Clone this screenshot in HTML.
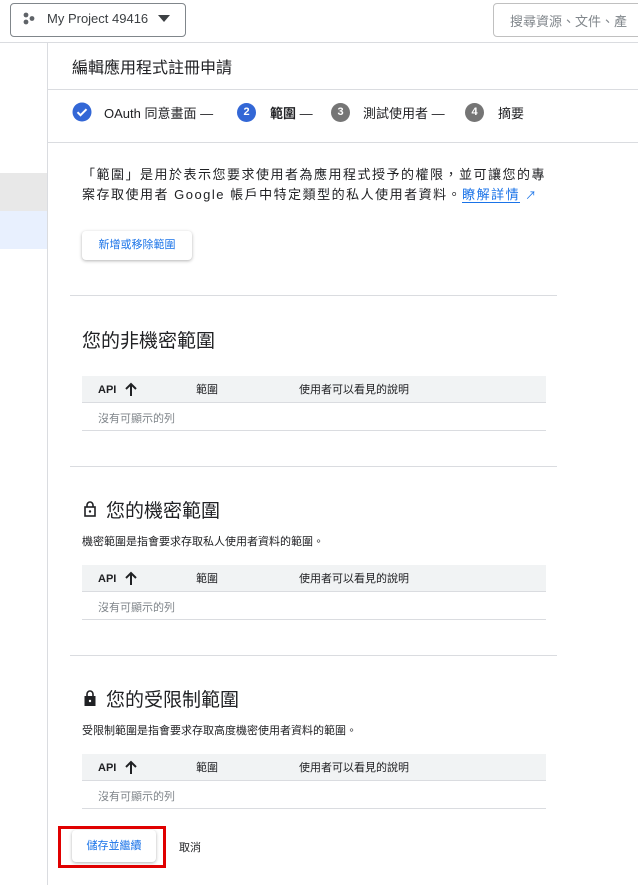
<!DOCTYPE html>
<html><head><meta charset="utf-8"><style>
*{margin:0;padding:0;box-sizing:border-box}
body{width:638px;height:885px;position:relative;background:#fff;font-family:"Liberation Sans","Noto Sans CJK TC",sans-serif;color:#202124;overflow:hidden}
.a{position:absolute}
.hr{position:absolute;height:1px;background:#dadce0}
.th{position:absolute;left:82px;width:464px;height:27px;background:#f1f3f4;border-bottom:1px solid #dadce0;font-size:11px}
.th span{position:absolute;top:7px;line-height:14px}
.th span.api{font-weight:bold}
.row{position:absolute;left:82px;width:464px;height:28px;border-bottom:1px solid #dadce0;font-size:11px;color:#80868b}
.row span{position:absolute;left:16px;top:7px}
h2{position:absolute;font-size:19px;font-weight:normal;left:82px}
.desc{position:absolute;left:82px;font-size:11px}
.arr{position:absolute;left:43px;top:6px}
</style></head><body>
<div class="a" style="left:10px;top:3px;width:176px;height:34px;border:1px solid #80868b;border-radius:4px"></div>
<svg class="a" style="left:22px;top:12px" width="14" height="14"><circle cx="4" cy="3" r="2.4" fill="#5f6368"/><circle cx="4" cy="10" r="2.4" fill="#5f6368"/><circle cx="10" cy="6.5" r="2.4" fill="#5f6368"/></svg>
<div class="a" style="left:47px;top:11px;font-size:13px;color:#3c4043">My Project 49416</div>
<svg class="a" style="left:158px;top:15px" width="12" height="8"><path d="M0 0h12L6 7z" fill="#3c4043"/></svg>
<div class="a" style="left:493px;top:3px;width:160px;height:34px;border:1px solid #c0c0c0;border-radius:4px"></div>
<div class="a" style="left:510px;top:11px;font-size:13px;color:#80868b;white-space:nowrap">搜尋資源、文件、產</div>
<div class="hr" style="left:0;top:42px;width:638px"></div>
<div class="a" style="left:47px;top:42px;width:1px;height:843px;background:#dadce0"></div>
<div class="a" style="left:0;top:173px;width:47px;height:38px;background:#e8e8e8"></div>
<div class="a" style="left:0;top:211px;width:47px;height:38px;background:#e8f0fe"></div>
<div class="a" style="left:72px;top:54px;font-size:16px">編輯應用程式註冊申請</div>
<div class="hr" style="left:47px;top:89px;width:591px"></div>
<svg class="a" style="left:72px;top:102px" width="20" height="20"><circle cx="10" cy="10" r="9.5" fill="#3367d6"/><path d="M5.5 10.2l3 3 6-6" stroke="#fff" stroke-width="2" fill="none"/></svg>
<div class="a" style="left:104px;top:103px;font-size:13px;white-space:nowrap">OAuth 同意畫面 —</div>
<div class="a" style="left:237px;top:103px;width:19px;height:19px;border-radius:50%;background:#3367d6;color:#fff;font-size:11px;font-weight:bold;text-align:center;line-height:19px">2</div>
<div class="a" style="left:270px;top:103px;font-size:13px;font-weight:bold;white-space:nowrap">範圍 <span style="font-weight:normal">—</span></div>
<div class="a" style="left:331px;top:103px;width:19px;height:19px;border-radius:50%;background:#757575;color:#fff;font-size:11px;font-weight:bold;text-align:center;line-height:19px">3</div>
<div class="a" style="left:363px;top:103px;font-size:13px;white-space:nowrap">測試使用者 —</div>
<div class="a" style="left:465px;top:103px;width:19px;height:19px;border-radius:50%;background:#757575;color:#fff;font-size:11px;font-weight:bold;text-align:center;line-height:19px">4</div>
<div class="a" style="left:498px;top:103px;font-size:13px">摘要</div>
<div class="hr" style="left:47px;top:142px;width:591px"></div>
<div class="a" style="left:82px;top:165px;white-space:nowrap;font-size:13px;line-height:20px;letter-spacing:1.5px">「範圍」是用於表示您要求使用者為應用程式授予的權限，並可讓您的專<br>案存取使用者 Google 帳戶中特定類型的私人使用者資料。<span style="color:#1a73e8;border-bottom:1px solid #1a73e8">瞭解詳情</span> <span style="color:#1a73e8;font-size:11px">↗</span></div>
<div class="a" style="left:82px;top:231px;width:110px;height:29px;border-radius:4px;box-shadow:0 1px 3px rgba(0,0,0,.3);font-size:11px;color:#1a73e8;text-align:center;line-height:29px">新增或移除範圍</div>
<div class="hr" style="left:70px;top:295px;width:487px"></div>
<h2 style="top:326px">您的非機密範圍</h2>
<div class="th" style="top:376px"><span class="api" style="left:16px">API</span><svg class="arr" width="12" height="14"><path d="M6 14V2M1 7l5-5 5 5" stroke="#202124" stroke-width="2" fill="none"/></svg><span style="left:114px">範圍</span><span style="left:217px">使用者可以看見的說明</span></div>
<div class="row" style="top:403px"><span>沒有可顯示的列</span></div>
<div class="hr" style="left:70px;top:466px;width:487px"></div>
<svg class="a" style="left:84px;top:501px" width="12" height="16"><rect x="1" y="6" width="10" height="9" fill="none" stroke="#202124" stroke-width="1.6"/><path d="M3 6V4a3 3 0 016 0v2" fill="none" stroke="#202124" stroke-width="1.6"/><circle cx="6" cy="10.5" r="1.2" fill="#202124"/></svg>
<h2 style="top:496px;left:106px">您的機密範圍</h2>
<div class="desc" style="top:533px">機密範圍是指會要求存取私人使用者資料的範圍。</div>
<div class="th" style="top:565px"><span class="api" style="left:16px">API</span><svg class="arr" width="12" height="14"><path d="M6 14V2M1 7l5-5 5 5" stroke="#202124" stroke-width="2" fill="none"/></svg><span style="left:114px">範圍</span><span style="left:217px">使用者可以看見的說明</span></div>
<div class="row" style="top:592px"><span>沒有可顯示的列</span></div>
<div class="hr" style="left:70px;top:655px;width:487px"></div>
<svg class="a" style="left:84px;top:690px" width="12" height="16"><rect x="0.5" y="6" width="11" height="10" fill="#202124"/><path d="M3 6V4a3 3 0 016 0v2" fill="none" stroke="#202124" stroke-width="1.6"/><circle cx="6" cy="11" r="1.2" fill="#fff"/></svg>
<h2 style="top:685px;left:106px">您的受限制範圍</h2>
<div class="desc" style="top:722px">受限制範圍是指會要求存取高度機密使用者資料的範圍。</div>
<div class="th" style="top:754px"><span class="api" style="left:16px">API</span><svg class="arr" width="12" height="14"><path d="M6 14V2M1 7l5-5 5 5" stroke="#202124" stroke-width="2" fill="none"/></svg><span style="left:114px">範圍</span><span style="left:217px">使用者可以看見的說明</span></div>
<div class="row" style="top:781px"><span>沒有可顯示的列</span></div>
<div class="a" style="left:72px;top:830px;width:84px;height:32px;border-radius:4px;box-shadow:0 1px 3px rgba(0,0,0,.3);font-size:11px;color:#1a73e8;text-align:center;line-height:32px">儲存並繼續</div>
<div class="a" style="left:58px;top:826px;width:108px;height:42px;border:3px solid #e00000"></div>
<div class="a" style="left:179px;top:839px;font-size:11px">取消</div>
</body></html>
